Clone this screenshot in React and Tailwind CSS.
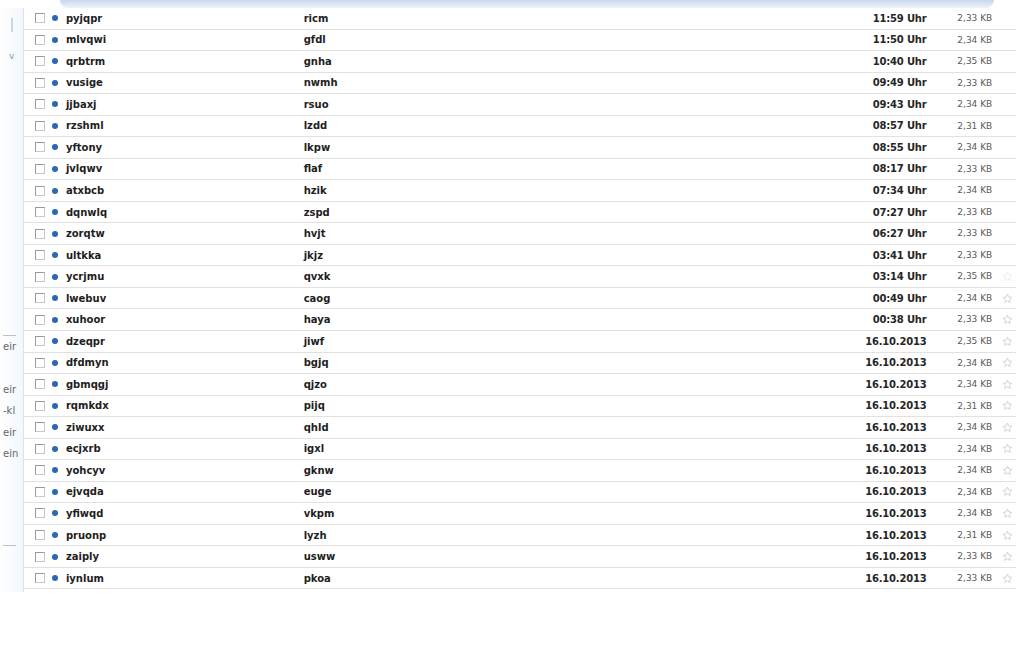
import React from "react";

const rows = [
  ["pyjqpr", "ricm", "11:59 Uhr", "2,33 KB"],
  ["mlvqwi", "gfdl", "11:50 Uhr", "2,34 KB"],
  ["qrbtrm", "gnha", "10:40 Uhr", "2,35 KB"],
  ["vusige", "nwmh", "09:49 Uhr", "2,33 KB"],
  ["jjbaxj", "rsuo", "09:43 Uhr", "2,34 KB"],
  ["rzshml", "lzdd", "08:57 Uhr", "2,31 KB"],
  ["yftony", "lkpw", "08:55 Uhr", "2,34 KB"],
  ["jvlqwv", "flaf", "08:17 Uhr", "2,33 KB"],
  ["atxbcb", "hzik", "07:34 Uhr", "2,34 KB"],
  ["dqnwlq", "zspd", "07:27 Uhr", "2,33 KB"],
  ["zorqtw", "hvjt", "06:27 Uhr", "2,33 KB"],
  ["ultkka", "jkjz", "03:41 Uhr", "2,33 KB"],
  ["ycrjmu", "qvxk", "03:14 Uhr", "2,35 KB"],
  ["lwebuv", "caog", "00:49 Uhr", "2,34 KB"],
  ["xuhoor", "haya", "00:38 Uhr", "2,33 KB"],
  ["dzeqpr", "jiwf", "16.10.2013", "2,35 KB"],
  ["dfdmyn", "bgjq", "16.10.2013", "2,34 KB"],
  ["gbmqgj", "qjzo", "16.10.2013", "2,34 KB"],
  ["rqmkdx", "pijq", "16.10.2013", "2,31 KB"],
  ["ziwuxx", "qhld", "16.10.2013", "2,34 KB"],
  ["ecjxrb", "igxl", "16.10.2013", "2,34 KB"],
  ["yohcyv", "gknw", "16.10.2013", "2,34 KB"],
  ["ejvqda", "euge", "16.10.2013", "2,34 KB"],
  ["yfiwqd", "vkpm", "16.10.2013", "2,34 KB"],
  ["pruonp", "lyzh", "16.10.2013", "2,31 KB"],
  ["zaiply", "usww", "16.10.2013", "2,33 KB"],
  ["iynlum", "pkoa", "16.10.2013", "2,33 KB"],
];

function Star({ faint }) {
  return (
    <svg width="11" height="11" viewBox="0 0 24 24" className={faint ? "opacity-40" : ""}>
      <path
        d="M12 2.5l2.9 6.2 6.6.7-5 4.5 1.4 6.6L12 17.2l-5.9 3.3 1.4-6.6-5-4.5 6.6-.7z"
        fill="none"
        stroke="#c4c4c4"
        strokeWidth="1.6"
        strokeLinejoin="round"
      />
    </svg>
  );
}

function SideItem({ text }) {
  return (
    <div className="flex pl-[3px] whitespace-nowrap text-[10px] text-[#666] h-[21.5px] items-center">
      <span>{text}</span>
    </div>
  );
}

export default function App() {
  return (
    <div
      className="w-[1024px] h-[654px] bg-white overflow-hidden flex flex-col"
      style={{ fontFamily: '"DejaVu Sans", Verdana, sans-serif' }}
    >
      <div className="h-[8px] flex shrink-0">
        <div className="w-[60px]" />
        <div className="flex-1 rounded-b-[40px] bg-gradient-to-b from-[#c8d8ec] to-[#eef3fa] mr-[30px]" />
      </div>
      <div className="flex flex-1">
        <div className="w-[24px] shrink-0 overflow-hidden border-r border-[#d6e4f3] bg-gradient-to-r from-white to-[#f3f7fc] flex flex-col h-[584px]">
          <div className="h-[10px]" />
          <div className="ml-[11px] w-[2px] h-[14px] bg-[#c9d6e6]" />
          <div className="h-[20px]" />
          <div className="ml-[9px] text-[9px] text-[#8a96a6] leading-none">v</div>
          <div className="h-[274px]" />
          <div className="ml-[3px] w-[13px] h-px bg-[#b9c2cc]" />
          <SideItem text="eir" />
          <div className="h-[21px]" />
          <SideItem text="eir" />
          <SideItem text="-kl" />
          <SideItem text="eir" />
          <SideItem text="ein" />
          <div className="h-[80px]" />
          <div className="ml-[3px] w-[13px] h-px bg-[#b9c2cc]" />
        </div>
        <div className="w-[992px] flex flex-col">
          {rows.map((r, i) => (
            <div
              key={i}
              className="h-[21.54px] shrink-0 flex items-center border-b border-[#e1e1e1]"
            >
              <div className="w-[11px] ml-[11px]">
                <div className="w-[10px] h-[10px] border border-[#9a9a9a] border-r-[#c8c8c8] border-b-[#c8c8c8] bg-white" />
              </div>
              <div className="w-[6px] h-[6px] rounded-full bg-[#2b68b1] ml-[6px]" />
              <div className="w-[247px] pl-[8px] text-[10px] font-bold text-[#1e1e1e]">{r[0]}</div>
              <div className="w-[400px] text-[10px] font-bold text-[#1e1e1e]">{r[1]}</div>
              <div className="w-[226px] text-right text-[10px] font-bold text-[#262626] tracking-[-0.2px]">{r[2]}</div>
              <div className="w-[31px]" />
              <div className="w-[40px] pt-[1px] text-[9px] text-[#5a5a5a] whitespace-nowrap">{r[3]}</div>
              <div className="w-[5px]" />
              <div className="w-[14px] flex items-center">
                {i >= 13 ? <Star /> : i === 12 ? <Star faint /> : null}
              </div>
            </div>
          ))}
        </div>
      </div>
    </div>
  );
}
